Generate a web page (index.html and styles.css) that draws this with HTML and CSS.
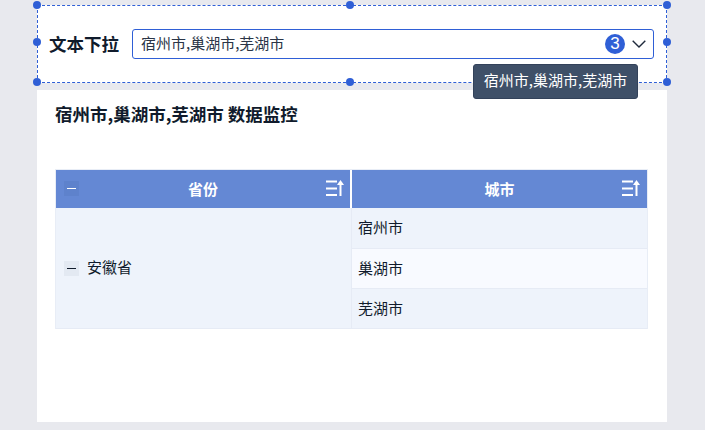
FILE: index.html
```html
<!DOCTYPE html>
<html lang="zh">
<head>
<meta charset="utf-8">
<title>数据监控</title>
<link rel="stylesheet" href="styles.css">
</head>
<body>
<section class="filter">
  <span class="handle h-tl"></span><span class="handle h-tc"></span><span class="handle h-tr"></span>
  <span class="handle h-ml"></span><span class="handle h-mr"></span>
  <span class="handle h-bl"></span><span class="handle h-bc"></span><span class="handle h-br"></span>
  <label class="filter-label">文本下拉</label>
  <div class="select">
    <span class="select-value">宿州市,巢湖市,芜湖市</span>
    <span class="badge">3</span>
    <svg class="chevron" width="14" height="8" viewBox="0 0 14 8"><path d="M0.700 0.700 7 7 13.300 0.700" fill="none" stroke="#1f2a3c" stroke-width="1.400"/></svg>
  </div>
  <div class="tooltip">宿州市,巢湖市,芜湖市</div>
</section>
<main class="card">
  <h1 class="title">宿州市,巢湖市,芜湖市 数据监控</h1>
  <div class="table">
    <div class="th th-left">
      <span class="toggle toggle-head"><i></i></span>
      <span class="th-text">省份</span>
      <svg class="sort" width="18" height="16" viewBox="0 0 18 16"><path d="M0 1.500h11M0 8.500h11M0 15h11" stroke="#fff" stroke-width="2" fill="none"/><path d="M14.500 16V4" stroke="#fff" stroke-width="2"/><path d="M14.500 0l3.500 5h-7z" fill="#fff"/></svg>
    </div>
    <div class="th th-right">
      <span class="th-text">城市</span>
      <svg class="sort" width="18" height="16" viewBox="0 0 18 16"><path d="M0 1.500h11M0 8.500h11M0 15h11" stroke="#fff" stroke-width="2" fill="none"/><path d="M14.500 16V4" stroke="#fff" stroke-width="2"/><path d="M14.500 0l3.500 5h-7z" fill="#fff"/></svg>
    </div>
    <div class="province">
      <span class="toggle"><i></i></span>
      <span class="province-name">安徽省</span>
    </div>
    <div class="cell"><span>宿州市</span></div>
    <div class="cell cell-alt"><span>巢湖市</span></div>
    <div class="cell"><span>芜湖市</span></div>
  </div>
</main>
</body>
</html>
```
FILE: styles.css
```css
* { box-sizing: border-box; }
html, body { margin: 0; height: 100%; }
body {
  width: 705px;
  height: 430px;
  overflow: hidden;
  background: #e8e9ee;
  padding: 5px 38px 8px 37px;
  display: flex;
  flex-direction: column;
  gap: 7px;
  font-family: "Noto Sans CJK SC", "Liberation Sans", sans-serif;
  color: #101b2c;
}
.filter {
  position: relative;
  flex: 0 0 78px;
  background: #fff;
  border: 1px dashed #2f5fd6;
  display: flex;
  align-items: center;
  padding: 0 11px;
}
.handle {
  position: absolute;
  width: 8px;
  height: 8px;
  border-radius: 50%;
  background: #2f5fd6;
}
.h-tl { left: -5px; top: -5px; }
.h-tc { left: 308px; top: -5px; }
.h-tr { right: -5px; top: -5px; }
.h-ml { left: -5px; top: 32px; }
.h-mr { right: -5px; top: 32px; }
.h-bl { left: -5px; bottom: -4px; }
.h-bc { left: 308px; bottom: -4px; }
.h-br { right: -5px; bottom: -4px; }
.filter-label {
  font-size: 17.500px;
  font-weight: 700;
  line-height: 30px;
  width: 83px;
  flex: none;
}
.select {
  flex: 0 0 522px;
  height: 30px;
  border: 1px solid #2f5fd6;
  border-radius: 3px;
  display: flex;
  align-items: center;
  padding: 0 7px 0 8px;
}
.select-value {
  flex: 1;
  font-size: 15px;
  line-height: 20px;
  padding-bottom: 3px;
  color: #2a3547;
}
.badge {
  width: 20px;
  height: 20px;
  border-radius: 50%;
  background: #2f5fd6;
  color: #fff;
  font-size: 17px;
  line-height: 20px;
  text-align: center;
  margin-right: 7px;
  font-family: "Liberation Sans", sans-serif;
}
.chevron { flex: none; }
.tooltip {
  position: absolute;
  left: 435px;
  top: 58px;
  width: 165px;
  height: 35px;
  background: #3f5068;
  border: 1px solid #33425a;
  border-radius: 3px;
  color: #fff;
  font-size: 15px;
  line-height: 29px;
  text-align: center;
  z-index: 2;
}
.card {
  flex: 1;
  background: #fff;
  padding: 11px 19px 0 18px;
}
.title {
  margin: 0 0 42px;
  font-size: 17.500px;
  font-weight: 700;
  line-height: 26px;
}
.table {
  width: 593px;
  display: grid;
  grid-template-columns: 296px 295px;
  grid-template-rows: 38px 41px 40px 40px;
  border: 1px solid #e8edf6;
  border-bottom: 0;
}
.th {
  position: relative;
  background: #6488d4;
  color: #fff;
  font-size: 15px;
  font-weight: 700;
  display: flex;
  align-items: center;
  justify-content: center;
}
.th-text { line-height: 20px; padding-bottom: 1px; }
.th-left { border-right: 2px solid #fff; }
.toggle {
  width: 15px;
  height: 15px;
  background: #e3e9f2;
  display: flex;
  align-items: center;
  justify-content: center;
  flex: none;
}
.toggle i {
  display: block;
  width: 9px;
  height: 1px;
  background: #101b2c;
}
.toggle-head {
  position: absolute;
  left: 8px;
  top: 11px;
  background: #5e82cc;
}
.toggle-head i { background: #fff; }
.sort {
  position: absolute;
  right: 6px;
  top: 10px;
}
.th-right .sort { right: 7px; }
.province {
  grid-row: 2 / 5;
  background: #eef3fb;
  border-right: 1px solid #e6ebf5;
  border-bottom: 1px solid #e6ebf5;
  display: flex;
  align-items: center;
  gap: 8px;
  padding-left: 8px;
  font-size: 15px;
}
.province-name { line-height: 20px; padding-bottom: 2px; }
.cell {
  background: #eef3fb;
  border-bottom: 1px solid #e6ebf5;
  display: flex;
  align-items: center;
  padding-left: 6px;
  font-size: 15px;
}
.cell span { line-height: 20px; padding-bottom: 2px; }
.cell-alt { background: #f8faff; }
```
